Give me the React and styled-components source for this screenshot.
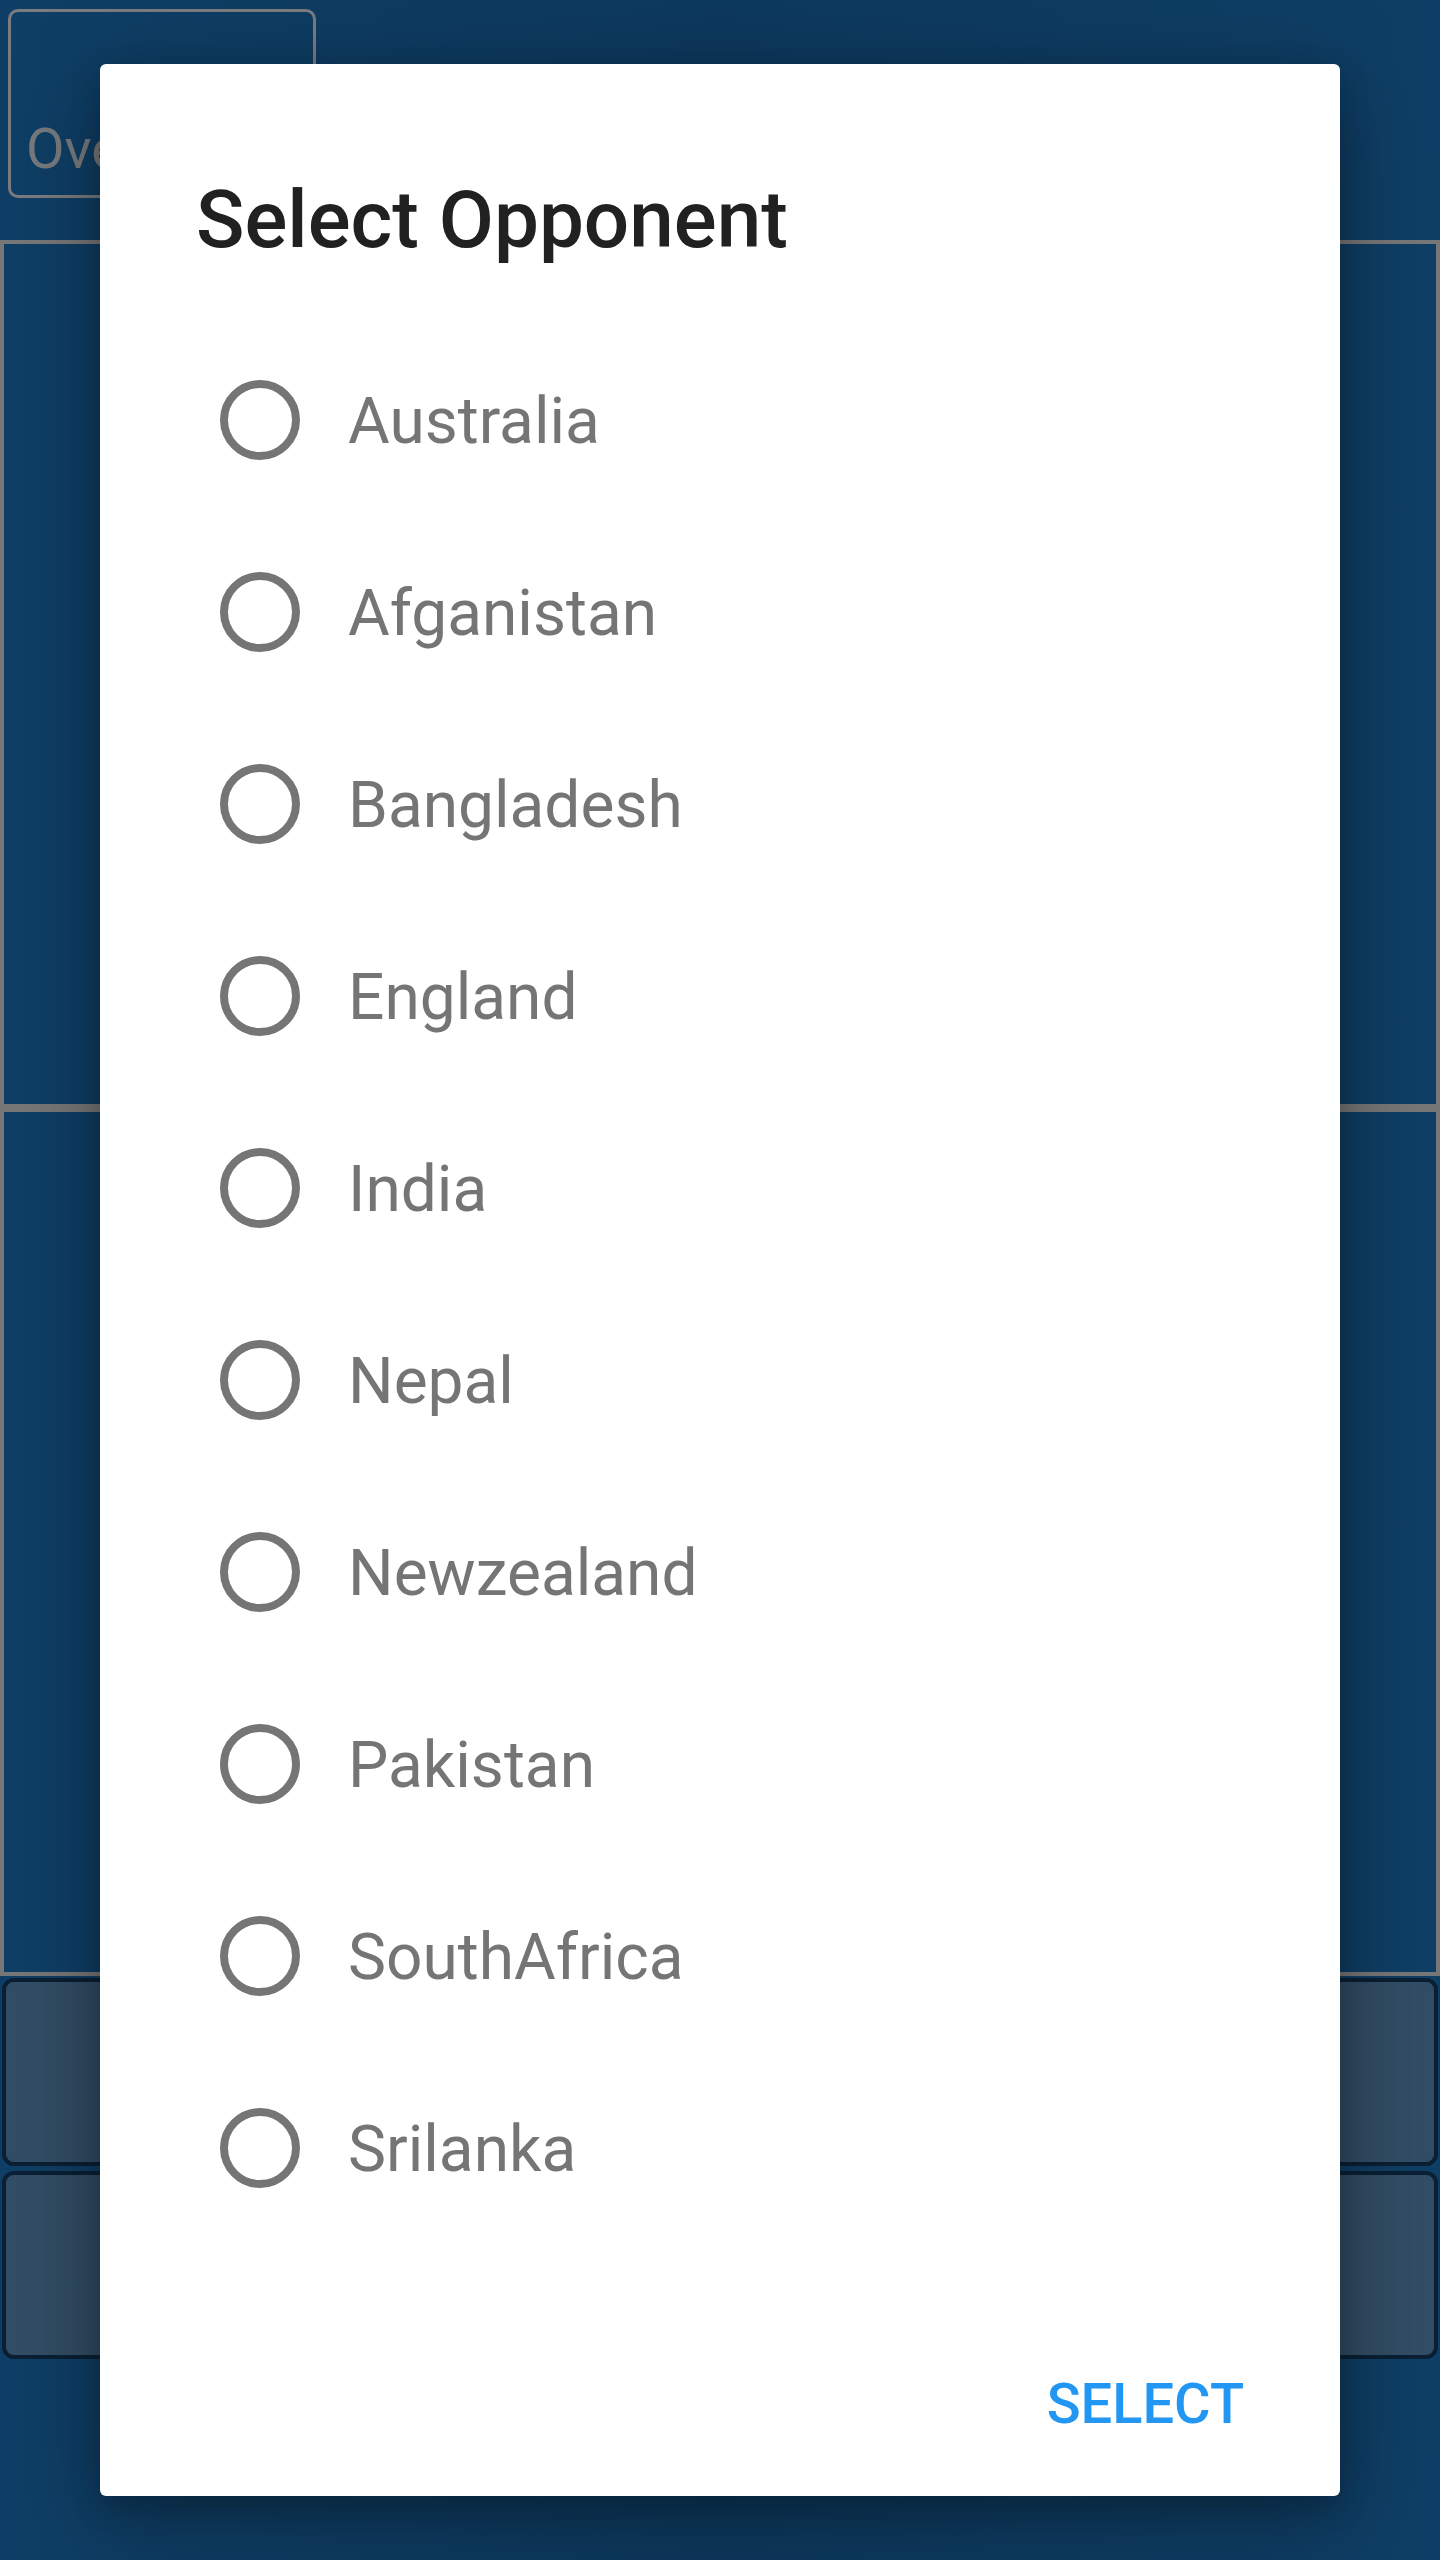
import React, { useState } from 'react';
import styled, { createGlobalStyle } from "styled-components";

const GlobalStyle = createGlobalStyle`
    html, body {
        margin: 0;
        padding: 0;
        background-color: #0e3b60;
        font-family: Roboto, "Liberation Sans", sans-serif;
    }
    * {
        box-sizing: border-box;
    }
`;

const Screen = styled.div`
    position: relative;
    width: 1440px;
    min-height: 2560px;
    background: linear-gradient(90deg, #0f3f66 0%, #0d395d 50%, #0f3f66 100%);
    display: flex;
    flex-direction: column;
`;

const TopBar = styled.div`
    display: flex;
    padding: 9px 8px 42px;
`;

const OutlinedField = styled.div`
    width: 308px;
    height: 189px;
    border: 3px solid #7a7c7f;
    border-radius: 10px;
    display: flex;
    align-items: flex-end;
    padding: 0 15px 18px;
    font-size: 56px;
    line-height: 1;
    color: #787b7e;
`;

const Panel = styled.div`
    height: 868px;
    border: 4px solid #787878;
`;

const Cards = styled.div`
    display: flex;
    flex-direction: column;
    gap: 5px;
    padding: 2px 2px 0;
`;

const Card = styled.div`
    height: 188px;
    background: linear-gradient(90deg, #324e66 0%, #2c465c 50%, #324e66 100%);
    border: 4px solid #0b2034;
    border-radius: 12px;
`;

const Dialog = styled.div`
    position: absolute;
    top: 64px;
    left: 100px;
    width: 1240px;
    height: 2432px;
    background: #ffffff;
    border-radius: 6px;
    box-shadow: 0 24px 90px 10px rgba(0, 0, 0, 0.28), 0 10px 30px rgba(0, 0, 0, 0.2);
    display: flex;
    flex-direction: column;
    padding-top: 108px;
`;

const Title = styled.h2`
    margin: 0;
    padding: 0 96px;
    font-size: 80px;
    line-height: 96px;
    font-weight: 500;
    color: #212121;
`;

const OptionList = styled.div`
    display: flex;
    flex-direction: column;
    margin-top: 56px;
`;

const Option = styled.label`
    display: flex;
    align-items: center;
    height: 192px;
    padding-left: 120px;
    gap: 48px;
    cursor: pointer;
`;

const Radio = styled.span`
    width: 80px;
    height: 80px;
    flex: none;
    border-radius: 50%;
    border: 8px solid ${props => props.checked ? "#2196f3" : "#757575"};
    display: flex;
    align-items: center;
    justify-content: center;
    &::after {
        content: "";
        width: 40px;
        height: 40px;
        border-radius: 50%;
        background: ${props => props.checked ? "#2196f3" : "transparent"};
    }
`;

const OptionText = styled.span`
    font-size: 64px;
    color: #757575;
    line-height: 1;
    padding-top: 4px;
`;

const Footer = styled.div`
    margin-top: auto;
    display: flex;
    justify-content: flex-end;
    padding: 0 96px 60px;
`;

const TextButton = styled.button`
    border: none;
    background: none;
    padding: 0;
    font-family: Roboto, "Liberation Sans", sans-serif;
    font-size: 56px;
    line-height: 64px;
    font-weight: 500;
    color: #2196f3;
    cursor: pointer;
`;

const teams = [
    "Australia",
    "Afganistan",
    "Bangladesh",
    "England",
    "India",
    "Nepal",
    "Newzealand",
    "Pakistan",
    "SouthAfrica",
    "Srilanka",
];

const App = () => {
    const [selected, setSelected] = useState(null)

    return (
        <Screen>
            <GlobalStyle />
            <TopBar>
                <OutlinedField>Overs</OutlinedField>
            </TopBar>
            <Panel />
            <Panel />
            <Cards>
                <Card />
                <Card />
            </Cards>

            <Dialog role="dialog">
                <Title>Select Opponent</Title>
                <OptionList>
                    {
                        teams.map(team => (
                            <Option key={team} onClick={() => setSelected(team)}>
                                <Radio checked={selected === team} />
                                <OptionText>{team}</OptionText>
                            </Option>
                        ))
                    }
                </OptionList>
                <Footer>
                    <TextButton>SELECT</TextButton>
                </Footer>
            </Dialog>
        </Screen>
    )
}

export default App;
